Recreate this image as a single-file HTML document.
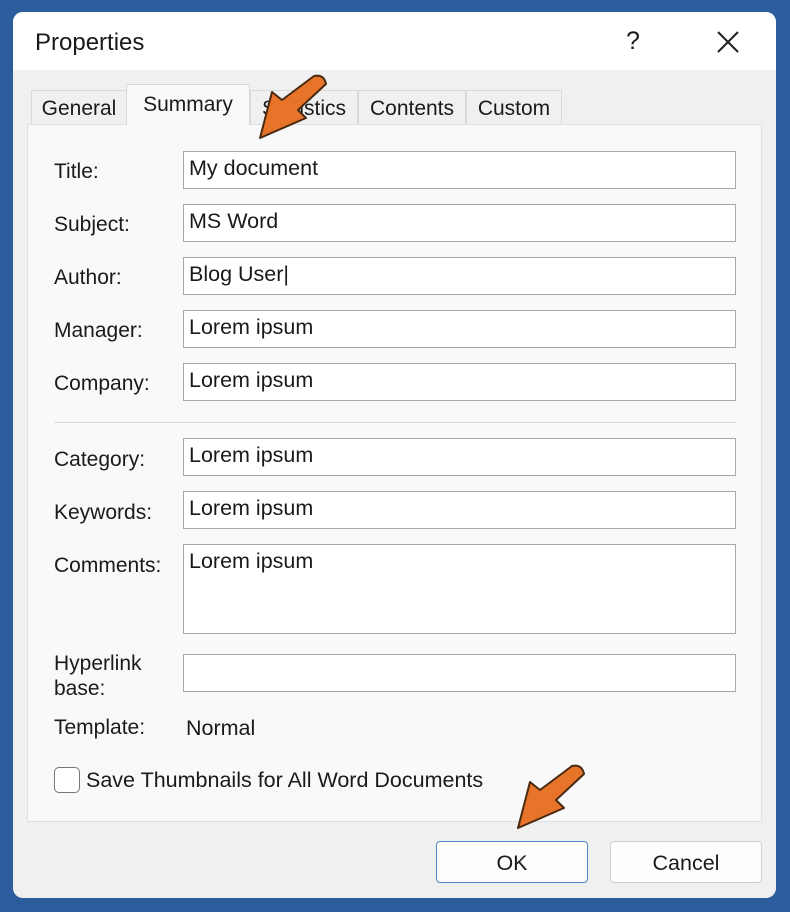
<!DOCTYPE html>
<html><head><style>
body{margin:0;width:790px;height:912px;background:#2b5c9b;font-family:"Liberation Sans",sans-serif;position:relative;overflow:hidden;color:#1a1a1a}
.dlg{position:absolute;left:13px;top:12px;width:763px;height:886px;background:#f0f0f0;border-radius:10px;overflow:hidden}
.tb{position:absolute;left:0;top:0;right:0;height:58px;background:#fff}
.a{position:absolute}
.t{position:absolute;font-size:21.5px}
.tab{position:absolute;top:90px;height:34px;background:#f0f0f0;border:1px solid #d9d9d9;border-bottom:none;box-sizing:border-box;font-size:21px;text-align:center;line-height:36px}
.panel{position:absolute;left:27px;top:124px;width:735px;height:698px;background:#f9f9f9;border:1px solid #e0e0e0;box-sizing:border-box}
.f{position:absolute;left:183px;width:553px;height:38px;background:#fff;border:1px solid #a8a8a8;box-sizing:border-box;font-size:21.5px;padding:4px 5px}
.l{position:absolute;left:54px;font-size:21px}
.btn{position:absolute;top:841px;height:42px;width:152px;background:#fdfdfd;border:1px solid #d0d0d0;border-radius:4px;box-sizing:border-box;text-align:center;line-height:42px;font-size:21.5px}
</style></head><body>
<div class="dlg"><div class="tb"></div></div>
<div class="t" style="left:35px;top:29px;font-size:24px">Properties</div>
<div class="t" style="left:626px;top:27px;font-size:25px">?</div>
<svg class="a" style="left:716px;top:30px" width="24" height="24"><path d="M2 2L22 22M22 2L2 22" stroke="#222" stroke-width="2"/></svg>
<div class="panel"></div>
<div class="tab" style="left:31px;width:96px">General</div>
<div class="tab" style="left:126px;top:84px;height:41px;width:124px;background:#f9f9f9;line-height:40px">Summary</div>
<div class="tab" style="left:250px;width:108px">Statistics</div>
<div class="tab" style="left:358px;width:108px">Contents</div>
<div class="tab" style="left:466px;width:96px">Custom</div>

<div class="l" style="top:160px">Title:</div><div class="f" style="top:151px">My document</div>
<div class="l" style="top:213px">Subject:</div><div class="f" style="top:204px">MS Word</div>
<div class="l" style="top:266px">Author:</div><div class="f" style="top:257px">Blog User|</div>
<div class="l" style="top:319px">Manager:</div><div class="f" style="top:310px">Lorem ipsum</div>
<div class="l" style="top:372px">Company:</div><div class="f" style="top:363px">Lorem ipsum</div>
<div class="a" style="left:54px;top:422px;width:682px;height:1px;background:#dcdcdc"></div>
<div class="l" style="top:448px">Category:</div><div class="f" style="top:438px">Lorem ipsum</div>
<div class="l" style="top:501px">Keywords:</div><div class="f" style="top:491px">Lorem ipsum</div>
<div class="l" style="top:554px">Comments:</div><div class="f" style="top:544px;height:90px">Lorem ipsum</div>
<div class="l" style="top:651px;line-height:25px">Hyperlink<br>base:</div><div class="f" style="top:654px"></div>
<div class="l" style="top:716px">Template:</div><div class="t" style="left:186px;top:716px">Normal</div>
<div class="a" style="left:54px;top:767px;width:26px;height:26px;border:1px solid #777;border-radius:5px;box-sizing:border-box;background:#fff"></div>
<div class="t" style="left:86px;top:768px">Save Thumbnails for All Word Documents</div>
<div class="btn" style="left:436px;border-color:#4f86c6">OK</div>
<div class="btn" style="left:610px">Cancel</div>

<svg class="a" style="left:250px;top:70px" width="85" height="75"><path d="M64 6 Q74 4 76 14 L48 40 L56 48 L10 68 L22 22 L32 30 Z" fill="#e8742a" stroke="#4a2a10" stroke-width="2" stroke-linejoin="round"/></svg>
<svg class="a" style="left:508px;top:760px" width="85" height="75"><path d="M64 6 Q74 4 76 14 L48 40 L56 48 L10 68 L22 22 L32 30 Z" fill="#e8742a" stroke="#4a2a10" stroke-width="2" stroke-linejoin="round"/></svg>
</body></html>
